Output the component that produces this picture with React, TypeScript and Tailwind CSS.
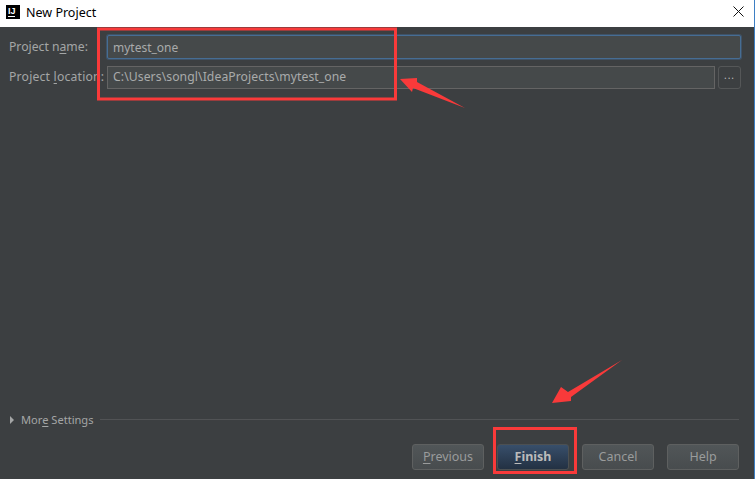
const font = "font-['Noto_Sans','Open_Sans',sans-serif]";

// The IntelliJ mark in the title bar
const IdeaLogo = () => (
  <div className="flex h-[14px] w-[14px] shrink-0 flex-col bg-black pl-[2px] pt-[2px]">
    <span className="font-['Liberation_Sans',sans-serif] text-[9px] font-bold leading-[8px] text-white">IJ</span>
    <div className="mt-[1px] h-px w-[7px] bg-white" />
  </div>
);

const Underlined = ({ before, letter, after }: { before?: string; letter: string; after: string }) => (
  <>
    {before}
    <span className="underline underline-offset-2">{letter}</span>
    {after}
  </>
);

const DialogButton = ({ children, primary }: { children: React.ReactNode; primary?: boolean }) => (
  <button
    className={
      primary
        ? "flex h-[26px] w-[72px] items-center justify-center rounded-[3px] border border-[#4c5052] bg-gradient-to-b from-[#384f6b] to-[#233143] text-[12.5px] font-bold text-[#bbbbbb]"
        : "flex h-[26px] w-[72px] items-center justify-center rounded-[3px] border border-[#5e6060] bg-gradient-to-b from-[#515658] to-[#484c4e] text-[12.5px] text-[#9a9c9c]"
    }
  >
    {children}
  </button>
);

// The red marks someone drew over the screenshot
const Annotations = () => (
  <svg className="pointer-events-none absolute inset-0" width={755} height={479} viewBox="0 0 755 479">
    <rect x={98.5} y={29} width={297} height={70} fill="none" stroke="#f93a3a" strokeWidth={3} />
    <rect x={494.5} y={428.5} width={81} height={44} fill="none" stroke="#f93a3a" strokeWidth={3} />
    <path d="M400 79 L417 78 L417 82 L465 108 L413 88 L412 92 Z" fill="#f93a3a" />
    <path d="M552 403 L561 387 L568 392 L622 360 L571 397 L571 401 Z" fill="#f93a3a" />
  </svg>
);

export default function App() {
  return (
    <div className={`relative flex h-[479px] w-[755px] flex-col overflow-hidden border-r border-[#3d7fc4] bg-[#3c3f41] ${font}`}>
      {/* Title bar */}
      <div className="flex h-[27px] shrink-0 items-center bg-white pb-[4px] pl-[6px] pr-[10px]">
        <IdeaLogo />
        <span className="ml-[6px] pt-[3px] text-[12.5px] text-black">New Project</span>
        <svg className="ml-auto" width={11} height={11} viewBox="0 0 11 11">
          <path d="M0.5 0.5 L10.5 10.5 M10.5 0.5 L0.5 10.5" stroke="#111" strokeWidth={1} />
        </svg>
      </div>

      {/* Form */}
      <div className="flex flex-col gap-[7px] pl-[9px] pr-[13px] pt-[8px] text-[12.2px] text-[#a4a6a6]">
        <div className="flex items-center">
          <label className="w-[98px] shrink-0">
            <Underlined before="Project n" letter="a" after="me:" />
          </label>
          <div className="flex h-[24px] flex-1 items-center rounded-[2px] border border-[#466d94] bg-[#45494a] pl-[5px] pt-px text-[12px] text-[#a9abab] shadow-[0_0_0_1px_#3f5266]">
            mytest_one
          </div>
        </div>
        <div className="flex items-center">
          <label className="w-[98px] shrink-0 whitespace-nowrap tracking-[0.2px]">
            <Underlined before="Project " letter="l" after="ocation:" />
          </label>
          <div className="flex h-[23px] flex-1 items-center border border-[#646464] bg-[#45494a] pl-[5px] tracking-[0.08px] text-[#a9abab]">
            C:\Users\songl\IdeaProjects\mytest_one
          </div>
          <button className="ml-[3px] flex h-[23px] w-[23px] items-center justify-center rounded-[3px] border border-[#555758] pb-[4px] text-[10px] tracking-[1px] text-[#bbbbbb]">
            ...
          </button>
        </div>
      </div>

      {/* More settings row */}
      <div className="mt-auto flex items-center pl-[10px] pr-[15px] text-[11.1px] text-[#a4a6a6]">
        <div className="h-0 w-0 border-y-[4px] border-l-[4px] border-y-transparent border-l-[#a4a6a6]" />
        <span className="ml-[7px] pt-[2px]">
          <Underlined before="Mor" letter="e" after=" Settings" />
        </span>
        <div className="ml-[6px] h-px flex-1 bg-[#515355]" />
      </div>

      {/* Buttons */}
      <div className="flex justify-end gap-[13px] pb-[9px] pr-[15px] pt-[15px]">
        <DialogButton>
          <Underlined letter="P" after="revious" />
        </DialogButton>
        <DialogButton primary>
          <Underlined letter="F" after="inish" />
        </DialogButton>
        <DialogButton>Cancel</DialogButton>
        <DialogButton>Help</DialogButton>
      </div>

      <Annotations />
    </div>
  );
}
